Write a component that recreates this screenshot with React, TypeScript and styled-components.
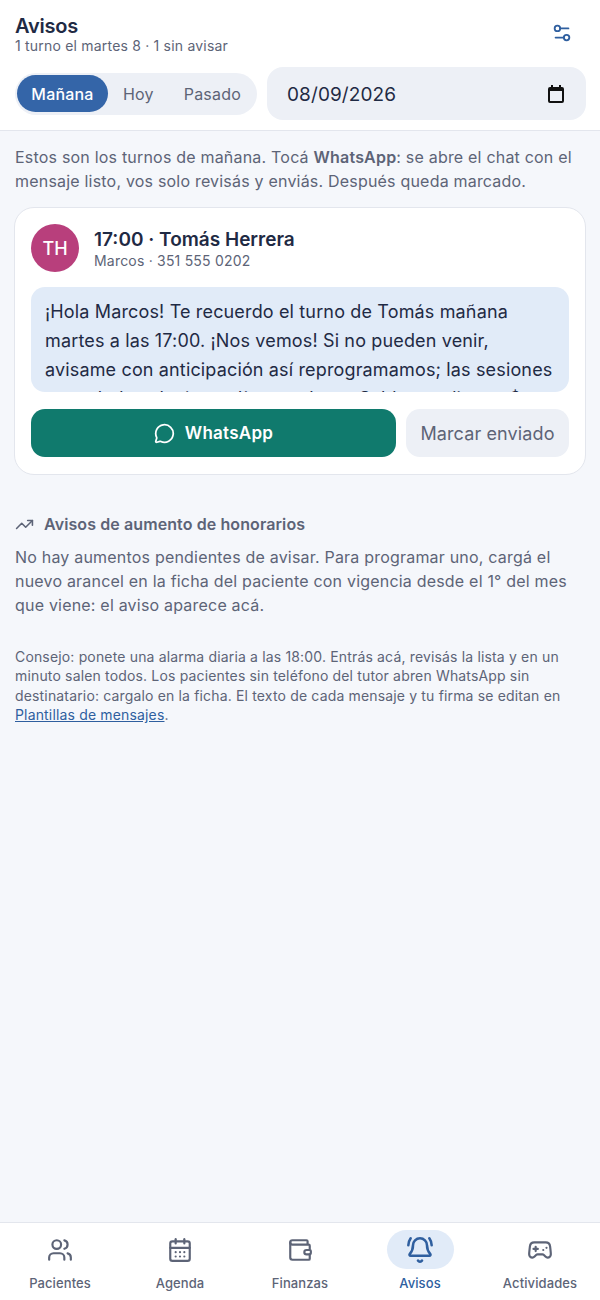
import React from "react";
import styled, { createGlobalStyle } from "styled-components";
import { Users, CalendarDays, Wallet, BellRing, Gamepad2, TrendingUp, MessageCircle, Settings2 } from "lucide-react";

const Global = createGlobalStyle`
  html, body { margin: 0; padding: 0; background: #f5f7fb; }
  body { font-family: Inter, "Noto Sans", sans-serif; -webkit-font-smoothing: antialiased; }
  * { box-sizing: border-box; }
`;

const Page = styled.div`
  width: 600px; height: 1300px; display: flex; flex-direction: column; background: #f5f7fb;
`;
const Header = styled.header`
  background: #fff; border-bottom: 1px solid #e3e6ed; padding: 13px 14px 10px 15px; height: 131px;
  display: flex; flex-direction: column; gap: 13px;
`;
const TopRow = styled.div`display: flex; justify-content: space-between; align-items: center; height: 41px;`;
const Title = styled.h1`margin: 0; font-size: 20px; line-height: 24px; font-weight: 600; letter-spacing: -0.2px; color: #1f2a44;`;
const Sub = styled.div`font-size: 14px; line-height: 17px; letter-spacing: 0.2px; color: #5d6477; margin-top: -1px;`;
const IconBtn = styled.button`
  border: 0; background: none; padding: 0 0 2px; width: 44px; height: 44px; margin-right: 2px; color: #2f5f9f;
  display: flex; align-items: center; justify-content: center;
`;
const Controls = styled.div`display: flex; gap: 10px; align-items: center;`;
const Segments = styled.div`
  display: flex; align-items: center; width: 242px; height: 42px; border-radius: 21px; background: #edf0f6; padding: 2px;
`;
const Seg = styled.button<{ $on?: boolean }>`
  border: 0; font: inherit; font-size: 16px; font-weight: ${p => (p.$on ? 500 : 400)}; letter-spacing: 0.2px; height: 37px;
  padding: 0 15px; border-radius: 19px; flex-shrink: 0;
  background: ${p => (p.$on ? "#3465a8" : "transparent")}; color: ${p => (p.$on ? "#fff" : "#5d6477")};
  ${p => p.$on && "width: 91px; padding: 0;"}
`;
const DateBox = styled.div`
  flex: 1; height: 53px; border-radius: 16px; background: #edf0f6; display: flex; align-items: center;
  justify-content: space-between; padding: 1px 22px 0 20px; font-size: 19px; letter-spacing: 0.1px; color: #1f2a44;
`;
const Main = styled.main`flex: 1; padding: 14px 14px 0;`;
const Intro = styled.p`margin: 0; padding: 0 1px; font-size: 16px; line-height: 24px; letter-spacing: 0.2px; color: #5d6477; b { font-weight: 600; }`;
const Card = styled.section`
  margin-top: 14px; height: 268px; background: #fff; border: 1px solid #e3e6ed; border-radius: 20px; padding: 16px;
  display: flex; flex-direction: column;
`;
const CardHead = styled.div`display: flex; align-items: center; gap: 15px; height: 48px;`;
const Avatar = styled.div`
  width: 48px; height: 48px; border-radius: 50%; background: #b83f7c; color: #fff; display: flex;
  align-items: center; justify-content: center; font-size: 18px; font-weight: 500;
`;
const WhoBlock = styled.div`padding-top: 2px;`;
const Who = styled.div`font-size: 19px; line-height: 24px; font-weight: 600; color: #1f2a44;`;
const Phone = styled.div`font-size: 14px; line-height: 19px; letter-spacing: 0.2px; color: #5d6477; margin-top: -1px;`;
const Message = styled.div`
  margin-top: 15px; height: 105px; overflow: hidden; background: #e1ebf8; border-radius: 14px;
  padding: 10px 14px; font-size: 18px; line-height: 29px; letter-spacing: 0.15px; color: #1f2a44;
`;
const Actions = styled.div`display: flex; gap: 10px; margin-top: 17px;`;
const Primary = styled.button`
  flex: 1; height: 48px; border: 0; border-radius: 14px; background: #107a6d; color: #fff; font: inherit;
  font-size: 17px; font-weight: 600; letter-spacing: 0.25px; display: flex; align-items: center; justify-content: center; gap: 10px;
`;
const Secondary = styled.button`
  width: 163px; height: 48px; border: 0; border-radius: 14px; background: #edf0f6; color: #5d6477; font: inherit; font-size: 18px; letter-spacing: 0.12px;
`;
const SectionTitle = styled.h2`
  margin: 39px 0 0; padding: 0 1px; display: flex; align-items: center; gap: 10px; font-size: 16px; line-height: 20px; font-weight: 600; letter-spacing: 0.1px; color: #5d6477;
`;
const Body = styled.p`margin: 11px 0 0; padding: 0 1px; font-size: 16px; line-height: 24px; letter-spacing: 0.2px; color: #5d6477;`;
const Tip = styled.p`
  margin: 30px 0 0; padding: 0 1px; font-size: 14px; line-height: 19.4px; letter-spacing: 0.16px; color: #5d6477;
  a { color: #2f5f9f; text-decoration: underline; }
`;
const Nav = styled.nav`
  height: 78px; background: #fff; border-top: 1px solid #e3e6ed; display: grid; grid-template-columns: repeat(5, 120px);
  padding-top: 7px;
`;
const NavItem = styled.div<{ $on?: boolean }>`
  display: flex; flex-direction: column; align-items: center; gap: 6px; font-size: 13px; line-height: 16px; font-weight: 500; letter-spacing: 0.1px;
  color: ${p => (p.$on ? "#2f5f9f" : "#5d6477")};
`;
const NavIcon = styled.div<{ $on?: boolean }>`
  width: 67px; height: 39px; border-radius: 20px; display: flex; align-items: center; justify-content: center;
  background: ${p => (p.$on ? "#e1ebf8" : "transparent")};
`;

const items = [
  { label: "Pacientes", Icon: Users },
  { label: "Agenda", Icon: CalendarDays },
  { label: "Finanzas", Icon: Wallet },
  { label: "Avisos", Icon: BellRing, on: true },
  { label: "Actividades", Icon: Gamepad2 },
];

const NativeCalendar = () => (
  <svg width="16" height="18" viewBox="0 0 16 18" fill="none">
    <path d="M3 0h2v2h6V0h2v2h1a2 2 0 0 1 2 2v12a2 2 0 0 1-2 2H2a2 2 0 0 1-2-2V4a2 2 0 0 1 2-2h1V0Z" fill="#111" />
    <rect x="2" y="6" width="12" height="10" fill="#edf0f6" />
  </svg>
);

export default function App() {
  return (
    <Page>
      <Global />
      <Header>
        <TopRow>
          <div>
            <Title>Avisos</Title>
            <Sub>1 turno el martes 8 · 1 sin avisar</Sub>
          </div>
          <IconBtn><Settings2 size={22} strokeWidth={2} /></IconBtn>
        </TopRow>
        <Controls>
          <Segments>
            <Seg $on>Mañana</Seg>
            <Seg>Hoy</Seg>
            <Seg>Pasado</Seg>
          </Segments>
          <DateBox>
            <span>08/09/2026</span>
            <NativeCalendar />
          </DateBox>
        </Controls>
      </Header>
      <Main>
        <Intro>Estos son los turnos de mañana. Tocá <b>WhatsApp</b>: se abre el chat con el mensaje listo, vos solo revisás y enviás. Después queda marcado.</Intro>
        <Card>
          <CardHead>
            <Avatar>TH</Avatar>
            <WhoBlock>
              <Who>17:00 · Tomás Herrera</Who>
              <Phone>Marcos · 351 555 0202</Phone>
            </WhoBlock>
          </CardHead>
          <Message>¡Hola Marcos! Te recuerdo el turno de Tomás mañana martes a las 17:00. ¡Nos vemos! Si no pueden venir, avisame con anticipación así reprogramamos; las sesiones canceladas el mismo día se cobran. Saldo pendiente: $ 12.000</Message>
          <Actions>
            <Primary><MessageCircle size={21} strokeWidth={2} />WhatsApp</Primary>
            <Secondary>Marcar enviado</Secondary>
          </Actions>
        </Card>
        <SectionTitle><TrendingUp size={19} strokeWidth={2} />Avisos de aumento de honorarios</SectionTitle>
        <Body>No hay aumentos pendientes de avisar. Para programar uno, cargá el nuevo arancel en la ficha del paciente con vigencia desde el 1° del mes que viene: el aviso aparece acá.</Body>
        <Tip>Consejo: ponete una alarma diaria a las 18:00. Entrás acá, revisás la lista y en un minuto salen todos. Los pacientes sin teléfono del tutor abren WhatsApp sin destinatario: cargalo en la ficha. El texto de cada mensaje y tu firma se editan en <a href="#p">Plantillas de mensajes</a>.</Tip>
      </Main>
      <Nav>
        {items.map(({ label, Icon, on }) => (
          <NavItem key={label} $on={on}>
            <NavIcon $on={on}><Icon size={on ? 28 : 26} strokeWidth={on ? 2.2 : 2} /></NavIcon>
            {label}
          </NavItem>
        ))}
      </Nav>
    </Page>
  );
}
